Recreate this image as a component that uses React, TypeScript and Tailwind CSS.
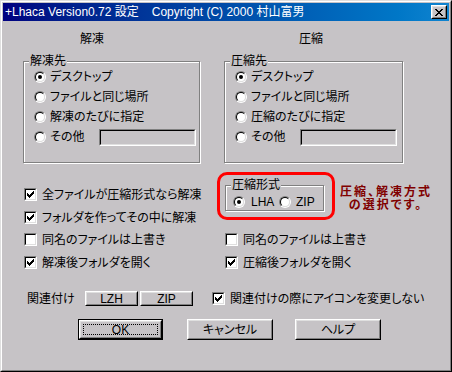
const FACE = "bg-[#c6c3c6]";

function Radio({ checked }: { checked?: boolean }) {
  return (
    <span className="flex h-[12px] w-[12px] shrink-0 rounded-full border border-t-[#808080] border-l-[#808080] border-b-white border-r-white">
      <span className="flex h-[10px] w-[10px] items-center justify-center rounded-full border border-t-black border-l-black border-b-[#dfdfdf] border-r-[#dfdfdf] bg-white">
        {checked && <span className="h-[4px] w-[4px] rounded-full bg-black" />}
      </span>
    </span>
  );
}

const CHECK_START = [2, 3, 4, 3, 2, 1, 0];

function Check({ checked }: { checked?: boolean }) {
  return (
    <span className="flex h-[13px] w-[13px] shrink-0 border border-t-[#808080] border-l-[#808080] border-b-white border-r-white">
      <span className="relative h-[11px] w-[11px] border border-t-black border-l-black border-b-[#dfdfdf] border-r-[#dfdfdf] bg-white">
        {checked && (
          <svg className="absolute left-0 top-0" width="9" height="9" viewBox="0 0 9 9" shapeRendering="crispEdges">
            {CHECK_START.map((s, i) => (
              <rect key={i} x={1 + i} y={1 + s} width="1" height="3" fill="#000" />
            ))}
          </svg>
        )}
      </span>
    </span>
  );
}

function Sunken({ className = "" }: { className?: string }) {
  return (
    <span className={`flex border border-t-[#808080] border-l-[#808080] border-b-white border-r-white ${className}`}>
      <span className={`flex-1 border border-t-black border-l-black border-b-[#dfdfdf] border-r-[#dfdfdf] ${FACE}`} />
    </span>
  );
}

function Group({ title, className = "", children }: { title: string; className?: string; children?: React.ReactNode }) {
  return (
    <div className={`relative border border-[#808080] shadow-[inset_1px_1px_0_#fff,1px_1px_0_#fff] ${className}`}>
      <span className={`absolute left-[5px] top-[-7px] px-px leading-[12px] ${FACE}`}>{title}</span>
      {children}
    </div>
  );
}

function Button({ children, className = "", isDefault }: { children: React.ReactNode; className?: string; isDefault?: boolean }) {
  const bevel = (
    <span className="flex flex-1 border border-t-white border-l-white border-b-black border-r-black">
      <span className="flex flex-1 items-center justify-center border border-t-[#dfdfdf] border-l-[#dfdfdf] border-b-[#808080] border-r-[#808080]">
        {isDefault ? (
          <span className="flex h-[11px] flex-1 mx-[2px] items-center justify-center border border-dotted border-black">{children}</span>
        ) : (
          children
        )}
      </span>
    </span>
  );
  return isDefault ? (
    <div className={`flex border border-black ${className}`}>{bevel}</div>
  ) : (
    <div className={`flex ${className}`}>{bevel}</div>
  );
}

const X_ROWS = [
  [0, 1, 6, 7],
  [1, 2, 5, 6],
  [2, 3, 4, 5],
  [3, 4],
  [2, 3, 4, 5],
  [1, 2, 5, 6],
  [0, 1, 6, 7],
];

function CloseBtn() {
  return (
    <div className="ml-auto flex h-[14px] w-[16px] border border-t-white border-l-white border-b-black border-r-black">
      <span className={`flex flex-1 items-center justify-center border border-t-[#dfdfdf] border-l-[#dfdfdf] border-b-[#808080] border-r-[#808080] ${FACE}`}>
        <svg width="8" height="7" viewBox="0 0 8 7" shapeRendering="crispEdges">
          {X_ROWS.map((cols, y) => cols.map((x) => <rect key={`${y}-${x}`} x={x} y={y} width="1" height="1" fill="#000" />))}
        </svg>
      </span>
    </div>
  );
}

function RadioRow({ checked, children }: { checked?: boolean; children: React.ReactNode }) {
  return (
    <div className="flex h-[20px] items-center gap-[4px]">
      <Radio checked={checked} />
      {children}
    </div>
  );
}

function TargetGroup({ title, ask }: { title: string; ask: string }) {
  return (
    <Group title={title} className="mt-[16px] h-[102px] pl-[10px] pt-[5px]">
      <RadioRow checked>
        <span>デスクトップ</span>
      </RadioRow>
      <RadioRow>
        <span>ファイルと同じ場所</span>
      </RadioRow>
      <RadioRow>
        <span>{ask}</span>
      </RadioRow>
      <RadioRow>
        <span className="w-[45px]">その他</span>
        <Sunken className="h-[17px] w-[97px]" />
      </RadioRow>
    </Group>
  );
}

function CheckRow({ checked, className = "", children }: { checked?: boolean; className?: string; children: React.ReactNode }) {
  return (
    <div className={`flex h-[13px] items-center gap-[5px] ${className}`}>
      <Check checked={checked} />
      <span className="whitespace-nowrap">{children}</span>
    </div>
  );
}

export default function App() {
  return (
    <div
      className={`h-[372px] w-[452px] overflow-hidden border border-t-[#dfdfdf] border-l-[#dfdfdf] border-b-black border-r-black text-[12px] leading-[12px] text-black font-['Liberation_Sans','Noto_Sans_CJK_JP',sans-serif] [font-feature-settings:'palt'] ${FACE}`}
    >
      <div className="flex h-full w-full flex-col border border-t-white border-l-white border-b-[#808080] border-r-[#808080] p-px">
        {/* title bar */}
        <div className="flex h-[18px] shrink-0 items-center bg-linear-to-r from-[#000080] to-[#1084d0] px-[2px] text-white">
          <span className="whitespace-pre">+Lhaca Version0.72 設定</span>
          <span className="ml-[13px] whitespace-pre">Copyright (C) 2000 村山富男</span>
          <CloseBtn />
        </div>

        {/* destinations */}
        <div className="flex gap-[24px] pl-[20px]">
          <div className="w-[177px]">
            <div className="ml-[57px] mt-[12px]">解凍</div>
            <TargetGroup title="解凍先" ask="解凍のたびに指定" />
          </div>
          <div className="w-[179px]">
            <div className="ml-[75px] mt-[12px]">圧縮</div>
            <TargetGroup title="圧縮先" ask="圧縮のたびに指定" />
          </div>
        </div>

        {/* options */}
        <div className="flex">
          <div className="w-[214px] pl-[21px]">
            <CheckRow checked className="mt-[25px]">全ファイルが圧縮形式なら解凍</CheckRow>
            <CheckRow checked className="mt-[10px]">フォルダを作ってその中に解凍</CheckRow>
            <CheckRow className="mt-[9px]">同名のファイルは上書き</CheckRow>
            <CheckRow checked className="mt-[10px]">解凍後フォルダを開く</CheckRow>
          </div>
          <div>
            <div className="mt-[9px] flex items-start">
              <div className="h-[48px] w-[118px] rounded-[10px] border-[3px] border-[#ff0000]">
                <Group title="圧縮形式" className="ml-[5px] mt-[10px] flex h-[26px] w-[99px] items-start pl-[7px] pt-[10px]">
                  <Radio checked />
                  <span className="ml-[6px] w-[28px]">LHA</span>
                  <Radio />
                  <span className="ml-[5px]">ZIP</span>
                </Group>
              </div>
              <div className="ml-[5px] mt-[14px] text-center text-[12px] font-bold leading-[13px] tracking-[2px] text-[#800000]">
                <div>圧縮、解凍方式</div>
                <div>の選択です。</div>
              </div>
            </div>
            <CheckRow className="ml-[8px] mt-[13px]">同名のファイルは上書き</CheckRow>
            <CheckRow checked className="ml-[8px] mt-[10px]">圧縮後フォルダを開く</CheckRow>
          </div>
        </div>

        {/* associations */}
        <div className="mt-[22px] flex h-[15px] items-center pl-[24px]">
          <span className="w-[58px]">関連付け</span>
          <Button className="h-[15px] w-[53px]">LZH</Button>
          <Button className="ml-[2px] h-[15px] w-[53px]">ZIP</Button>
          <CheckRow checked className="ml-[19px] gap-[3px]">関連付けの際にアイコンを変更しない</CheckRow>
        </div>

        {/* dialog buttons */}
        <div className="mt-[13px] flex pl-[75px]">
          <Button isDefault className="h-[21px] w-[85px]">OK</Button>
          <Button className="ml-[24px] h-[21px] w-[86px]">キャンセル</Button>
          <Button className="ml-[22px] h-[21px] w-[86px]">ヘルプ</Button>
        </div>
      </div>
    </div>
  );
}
